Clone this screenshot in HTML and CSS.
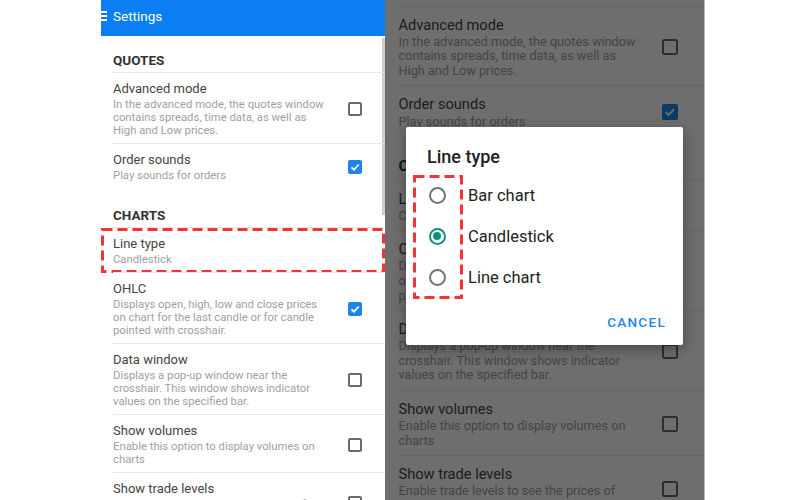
FILE: index.html
```html
<!DOCTYPE html>
<html>
<head>
  <meta charset="utf-8">
  <meta name="viewport" content="width=device-width, initial-scale=1">
  <title>Settings</title>
  <link rel="stylesheet" href="styles.css">
</head>
<body>
  <div class="frame">

    <div class="phone">
      <div class="appbar"><span class="burger"><i></i><i></i><i></i></span>Settings</div>
      <div class="scroll-thumb"></div>
      <div class="list">
        <div class="section-title">QUOTES</div>
        <div class="pref">
          <div class="pref-text">
            <div class="pref-title">Advanced mode</div>
            <div class="pref-desc">In the advanced mode, the quotes window contains spreads, time data, as well as High and Low prices.</div>
          </div>
          <span class="check"></span>
        </div>
        <div class="pref">
          <div class="pref-text">
            <div class="pref-title">Order sounds</div>
            <div class="pref-desc">Play sounds for orders</div>
          </div>
          <span class="check on"><svg viewBox="0 0 14 14"><polyline points="3.4,7.3 5.9,9.7 10.8,4.5"/></svg></span>
        </div>
        <div class="section-title">CHARTS</div>
        <div class="pref">
          <div class="pref-text">
            <div class="pref-title">Line type</div>
            <div class="pref-desc">Candlestick</div>
          </div>
          <div class="dash-box wide">
            <svg viewBox="0 0 284 45"><rect x="1.5" y="1.5" width="281" height="42"/></svg>
          </div>
        </div>
        <div class="pref">
          <div class="pref-text">
            <div class="pref-title">OHLC</div>
            <div class="pref-desc">Displays open, high, low and close prices on chart for the last candle or for candle pointed with crosshair.</div>
          </div>
          <span class="check on"><svg viewBox="0 0 14 14"><polyline points="3.4,7.3 5.9,9.7 10.8,4.5"/></svg></span>
        </div>
        <div class="pref">
          <div class="pref-text">
            <div class="pref-title">Data window</div>
            <div class="pref-desc">Displays a pop-up window near the crosshair. This window shows indicator values on the specified bar.</div>
          </div>
          <span class="check"></span>
        </div>
        <div class="pref">
          <div class="pref-text">
            <div class="pref-title">Show volumes</div>
            <div class="pref-desc">Enable this option to display volumes on charts</div>
          </div>
          <span class="check"></span>
        </div>
        <div class="pref">
          <div class="pref-text">
            <div class="pref-title">Show trade levels</div>
            <div class="pref-desc">Enable trade levels to see the prices of open positions and orders on the chart.</div>
          </div>
          <span class="check"></span>
        </div>
      </div>
    </div>

    <div class="phone dimmed">
      <div class="list">
        <div class="section-title">QUOTES</div>
        <div class="pref">
          <div class="pref-text">
            <div class="pref-title">Advanced mode</div>
            <div class="pref-desc">In the advanced mode, the quotes window contains spreads, time data, as well as High and Low prices.</div>
          </div>
          <span class="check"></span>
        </div>
        <div class="pref">
          <div class="pref-text">
            <div class="pref-title">Order sounds</div>
            <div class="pref-desc">Play sounds for orders</div>
          </div>
          <span class="check on"><svg viewBox="0 0 14 14"><polyline points="3.4,7.3 5.9,9.7 10.8,4.5"/></svg></span>
        </div>
        <div class="section-title">CHARTS</div>
        <div class="pref">
          <div class="pref-text">
            <div class="pref-title">Line type</div>
            <div class="pref-desc">Candlestick</div>
          </div>
        </div>
        <div class="pref">
          <div class="pref-text">
            <div class="pref-title">OHLC</div>
            <div class="pref-desc">Displays open, high, low and close prices on chart for the last candle or for candle pointed with crosshair.</div>
          </div>
          <span class="check on"><svg viewBox="0 0 14 14"><polyline points="3.4,7.3 5.9,9.7 10.8,4.5"/></svg></span>
        </div>
        <div class="pref">
          <div class="pref-text">
            <div class="pref-title">Data window</div>
            <div class="pref-desc">Displays a pop-up window near the crosshair. This window shows indicator values on the specified bar.</div>
          </div>
          <span class="check"></span>
        </div>
        <div class="pref">
          <div class="pref-text">
            <div class="pref-title">Show volumes</div>
            <div class="pref-desc">Enable this option to display volumes on charts</div>
          </div>
          <span class="check"></span>
        </div>
        <div class="pref">
          <div class="pref-text">
            <div class="pref-title">Show trade levels</div>
            <div class="pref-desc">Enable trade levels to see the prices of open positions and orders on the chart.</div>
          </div>
          <span class="check"></span>
        </div>
      </div>

      <div class="scrim"></div>

      <div class="dialog">
        <div class="dialog-title">Line type</div>
        <div class="option"><span class="radio"></span>Bar chart</div>
        <div class="option"><span class="radio on"></span>Candlestick</div>
        <div class="option"><span class="radio"></span>Line chart</div>
        <div class="dialog-actions"><span class="text-btn">CANCEL</span></div>
        <div class="dash-box narrow">
          <svg viewBox="0 0 50 124"><rect x="1.5" y="1.5" width="47" height="121"/></svg>
        </div>
      </div>
    </div>

  </div>
</body>
</html>
```

FILE: styles.css
```css
* {
  margin: 0;
  padding: 0;
  box-sizing: border-box;
}

body {
  background: #fff;
  font-family: Roboto, "Noto Sans", sans-serif;
}

.frame {
  display: flex;
  height: 500px;
  padding-left: 101px;
}

.phone {
  position: relative;
  width: 284px;
  height: 500px;
  overflow: hidden;
  background: #fff;
}

.appbar {
  display: flex;
  align-items: center;
  height: 36px;
  padding: 0 0 4px 0;
  background: #0b7ef4;
  color: #fff;
  font-size: 13.5px;
}

.burger {
  display: flex;
  flex-direction: column;
  gap: 2.6px;
  width: 6px;
  margin-right: 6px;
}

.burger i {
  display: block;
  height: 1.8px;
  background: #fff;
}

.scroll-thumb {
  position: absolute;
  top: 38px;
  right: 0;
  width: 3px;
  height: 177px;
  background: #cdcdcd;
}

/* settings list */

.section-title {
  padding: 16px 12px 4px;
  font-size: 13.5px;
  font-weight: 700;
  line-height: 16px;
  color: #333;
}

.pref + .section-title {
  margin-top: 3px;
}

.pref {
  position: relative;
  display: flex;
  align-items: center;
  margin-left: 12px;
  padding: 8px 23px 6px 0;
  border-top: 1px solid #e8e8e8;
}

.pref-text {
  flex: 1;
}

.pref-title {
  font-size: 13px;
  line-height: 16px;
  color: #444;
}

.pref-desc {
  max-width: 216px;
  margin-top: 1px;
  font-size: 11.3px;
  line-height: 13px;
  color: #a0a0a0;
}

.check {
  display: flex;
  width: 14px;
  height: 14px;
  border: 2px solid #6a6a6a;
  border-radius: 2px;
}

.check.on {
  border: 0;
  background: #1f84ea;
}

.check svg {
  width: 14px;
  height: 14px;
}

.check polyline {
  fill: none;
  stroke: #fff;
  stroke-width: 1.7;
}

/* red dashed annotation boxes */

.dash-box {
  position: absolute;
}

.dash-box svg {
  display: block;
  width: 100%;
  height: 100%;
}

.dash-box rect {
  fill: none;
  stroke: #f0343a;
  stroke-width: 3;
  stroke-dasharray: 10 5;
}

.dash-box.wide {
  top: 0;
  left: -12px;
  width: 284px;
  height: 45px;
}

.dash-box.narrow {
  top: 48px;
  left: 7px;
  width: 50px;
  height: 124px;
}

/* right screen with the dialog */

.phone.dimmed {
  width: 320px;
  border-right: 1px solid #b9b9b9;
}

.dimmed .list {
  zoom: 1.125;
  margin-top: -31px;
}

.scrim {
  position: absolute;
  inset: 0;
  background: rgba(0, 0, 0, 0.57);
}

.dialog {
  position: absolute;
  top: 127px;
  left: 21px;
  width: 277px;
  padding: 20px 0 15px;
  background: #fff;
  border-radius: 2px;
  box-shadow: 0 4px 14px rgba(0, 0, 0, 0.35);
}

.dialog-title {
  margin-bottom: 7.5px;
  padding-left: 21px;
  font-size: 18px;
  font-weight: 500;
  line-height: 20px;
  color: #222;
}

.option {
  display: flex;
  align-items: center;
  gap: 22.5px;
  height: 41px;
  padding-left: 22.5px;
  font-size: 16.5px;
  color: #222;
}

.radio {
  display: flex;
  align-items: center;
  justify-content: center;
  width: 17px;
  height: 17px;
  border: 2px solid #747474;
  border-radius: 50%;
}

.radio.on {
  border-color: #12917f;
}

.radio.on::after {
  content: '';
  width: 8px;
  height: 8px;
  border-radius: 50%;
  background: #12917f;
}

.dialog-actions {
  display: flex;
  justify-content: flex-end;
  margin-top: 16.5px;
  padding-right: 17px;
}

.text-btn {
  font-size: 13.5px;
  font-weight: 500;
  line-height: 16px;
  letter-spacing: 1.3px;
  color: #1c86ea;
}
```
